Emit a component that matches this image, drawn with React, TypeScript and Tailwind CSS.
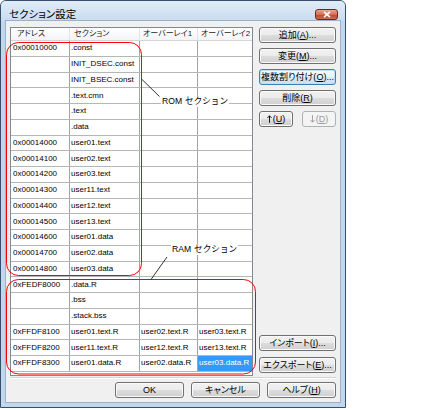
import type { ReactNode } from "react";

type Row = [string, string, string, string];

const rows: Row[] = [
  ["0x00010000", ".const", "", ""],
  ["", "INIT_DSEC.const", "", ""],
  ["", "INIT_BSEC.const", "", ""],
  ["", ".text.cmn", "", ""],
  ["", ".text", "", ""],
  ["", ".data", "", ""],
  ["0x00014000", "user01.text", "", ""],
  ["0x00014100", "user02.text", "", ""],
  ["0x00014200", "user03.text", "", ""],
  ["0x00014300", "user11.text", "", ""],
  ["0x00014400", "user12.text", "", ""],
  ["0x00014500", "user13.text", "", ""],
  ["0x00014600", "user01.data", "", ""],
  ["0x00014700", "user02.data", "", ""],
  ["0x00014800", "user03.data", "", ""],
  ["0xFEDF8000", ".data.R", "", ""],
  ["", ".bss", "", ""],
  ["", ".stack.bss", "", ""],
  ["0xFFDF8100", "user01.text.R", "user02.text.R", "user03.text.R"],
  ["0xFFDF8200", "user11.text.R", "user12.text.R", "user13.text.R"],
  ["0xFFDF8300", "user01.data.R", "user02.data.R", "user03.data.R"],
];

function Btn({
  children,
  className = "",
  focus = false,
  disabled = false,
}: {
  children: ReactNode;
  className?: string;
  focus?: boolean;
  disabled?: boolean;
}) {
  let look =
    "border-[#707070] bg-[linear-gradient(#f2f2f2,#ebebeb_50%,#dddddd_50%,#cfcfcf)] text-black shadow-[inset_0_0_0_1px_#fafafa]";
  if (focus)
    look =
      "border-[#3c7fb1] bg-[linear-gradient(#f3f9fd,#e9f3f9_50%,#dbe9f2_50%,#cddfec)] text-black shadow-[inset_0_0_0_1px_#b9e3f9]";
  if (disabled) look = "border-[#adb2b5] bg-[#f4f4f4] text-[#9a9a9a]";
  return (
    <div
      className={`flex h-[16px] items-center justify-center whitespace-nowrap rounded-[3px] border text-[9px] leading-none [font-feature-settings:'palt'] ${look} ${className}`}
    >
      {children}
    </div>
  );
}

function U({ children }: { children: ReactNode }) {
  return <span className="underline underline-offset-1">{children}</span>;
}

function Arrow({ down = false }: { down?: boolean }) {
  return (
    <svg width="5" height="8" viewBox="0 0 5 8" className={`mr-[1px] ${down ? "rotate-180" : ""}`}>
      <path d="M2.5 0.8 V7.8 M0.4 3 L2.5 0.8 L4.6 3" fill="none" stroke="currentColor" strokeWidth="0.9" />
    </svg>
  );
}

export default function App() {
  return (
    <div className="h-[410px] w-[434px] bg-white font-['Liberation_Sans','Noto_Sans_CJK_JP',sans-serif]">
      <div className="relative flex h-[408px] w-[346px] flex-col rounded-t-[6px] border border-[#34506c] bg-[#c3d7ec]">
        {/* title bar */}
        <div className="flex h-[20px] items-center justify-between rounded-t-[5px] bg-[linear-gradient(#e2ecf7,#c9dbee)] pl-[8px] pr-[7px] pt-[6px]">
          <span className="text-[10.5px] leading-none text-black [font-feature-settings:'palt']">
            セクション設定
          </span>
          <div className="flex h-[11px] w-[23px] items-center justify-center rounded-[3px] border border-[#6d2a1d] bg-[linear-gradient(#e8a593,#d26f55_50%,#c0452b_50%,#cf6a4c)]">
            <svg width="8" height="7" viewBox="0 0 8 7">
              <path d="M1 0.8 L7 6.2 M7 0.8 L1 6.2" stroke="#fff" strokeWidth="1.6" />
            </svg>
          </div>
        </div>

        {/* client area */}
        <div className="mx-[5px] mb-[5px] flex h-[381px] flex-col bg-[#f0f0f0] px-[4px] pb-[4px] pt-[6px] outline outline-[#9ab2cb]">
          <div className="flex h-[349px] gap-[6px]">
            {/* list view */}
            <div className="flex h-[349px] w-[243px] flex-col border border-[#828790] bg-white text-[8px] leading-none text-black [font-feature-settings:'palt']">
              <div className="flex h-[13px] border-b border-[#d5d5d5] bg-[linear-gradient(#ffffff,#f3f4f6)] text-[#1e1e1e]">
                <div className="flex w-[59px] items-center border-r border-[#e3e5e8] pl-[6px]">アドレス</div>
                <div className="flex w-[70px] items-center border-r border-[#e3e5e8] pl-[4px]">セクション</div>
                <div className="flex w-[58px] items-center border-r border-[#e3e5e8] pl-[3px]">オーバーレイ1</div>
                <div className="flex flex-1 items-center pl-[3px]">オーバーレイ2</div>
              </div>
              {rows.map((r, i) => (
                <div key={i} className="flex h-[15.75px] border-b border-[#b6b6b6]">
                  <div className="flex w-[59px] items-center overflow-hidden whitespace-nowrap border-r border-[#a3a3a3] pl-[2px]">
                    {r[0]}
                  </div>
                  <div className="flex w-[70px] items-center overflow-hidden whitespace-nowrap border-r border-[#a3a3a3] pl-[1px]">
                    {r[1]}
                  </div>
                  <div className="flex w-[58px] items-center overflow-hidden whitespace-nowrap border-r border-[#a3a3a3] pl-[1px]">
                    {r[2]}
                  </div>
                  <div
                    className={`flex flex-1 items-center overflow-hidden whitespace-nowrap pl-[1px] ${
                      i === rows.length - 1 ? "bg-[#3399ff] text-white" : ""
                    }`}
                  >
                    {r[3]}
                  </div>
                </div>
              ))}
            </div>

            {/* right buttons */}
            <div className="flex w-[77px] flex-col gap-[5px] pb-[3px]">
              <Btn>
                追加(<U>A</U>)...
              </Btn>
              <Btn>
                変更(<U>M</U>)...
              </Btn>
              <Btn focus>
                複数割り付け(<U>O</U>)...
              </Btn>
              <Btn>
                削除(<U>R</U>)
              </Btn>
              <div className="flex justify-between">
                <Btn className="w-[34px]">
                  <Arrow />(<U>U</U>)
                </Btn>
                <Btn className="w-[34px]" disabled>
                  <Arrow down />(<U>D</U>)
                </Btn>
              </div>
              <div className="mt-auto flex flex-col gap-[6px]">
                <Btn>
                  インポート(<U>I</U>)...
                </Btn>
                <Btn>
                  エクスポート(<U>E</U>)...
                </Btn>
              </div>
            </div>
          </div>

          <div className="mt-[1px] h-[2px] border-t border-b border-t-[#d5d5d5] border-b-white" />

          <div className="mt-[3px] flex justify-end gap-[7px]">
            <Btn className="w-[69px]">OK</Btn>
            <Btn className="w-[69px]">キャンセル</Btn>
            <Btn className="w-[69px]">
              ヘルプ(<U>H</U>)
            </Btn>
          </div>
        </div>

        {/* annotations */}
        <svg
          className="pointer-events-none absolute left-[-1px] top-[-1px]"
          width="346"
          height="408"
          viewBox="0 0 346 408"
        >
          <rect x="6.5" y="42.5" width="135" height="233" rx="12" fill="none" stroke="#ff0000" strokeWidth="1" />
          <rect x="6.5" y="279.5" width="249" height="94.5" rx="12" fill="none" stroke="#ff0000" strokeWidth="1" />
          <line x1="141.5" y1="79" x2="159.5" y2="96.5" stroke="#000" strokeWidth="0.8" />
          <line x1="167" y1="257" x2="151" y2="279.5" stroke="#000" strokeWidth="0.8" />
        </svg>
        <div className="pointer-events-none absolute left-[160px] top-[95px] flex items-center bg-white px-[1px] text-[8.6px] leading-[11px] text-black">
          <span>ROM</span>
          <span className="ml-[3px]">セクション</span>
        </div>
        <div className="pointer-events-none absolute left-[170px] top-[243px] flex items-center bg-white px-[1px] text-[8.6px] leading-[11px] text-black">
          <span>RAM</span>
          <span className="ml-[3px]">セクション</span>
        </div>
      </div>
    </div>
  );
}
